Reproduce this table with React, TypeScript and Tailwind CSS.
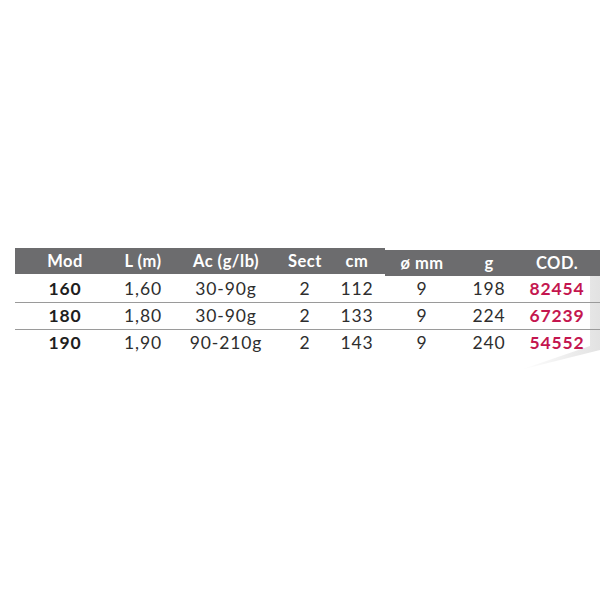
const cols = ['w-[100px]', 'w-[56px]', 'w-[110px]', 'w-[48px]', 'w-[56px]', 'w-[74px]', 'w-[60px]', 'w-[76px]'];

const head = ['Mod', 'L (m)', 'Ac (g/lb)', 'Sect', 'cm', 'ø mm', 'g', 'COD.'];

const rows = [
  ['160', '1,60', '30-90g', '2', '112', '9', '198', '82454'],
  ['180', '1,80', '30-90g', '2', '133', '9', '224', '67239'],
  ['190', '1,90', '90-210g', '2', '143', '9', '240', '54552'],
];

export default function App() {
  return (
    <div className="relative w-[600px] h-[600px] bg-white overflow-hidden" style={{ fontFamily: 'Lato, "Open Sans", sans-serif' }}>
      {/* fond gris décoratif à droite */}
      <svg className="absolute right-0 top-[274px]" width="90" height="100" viewBox="0 0 90 100">
        <defs>
          <linearGradient id="fade" x1="0" y1="0" x2="1" y2="0">
            <stop offset="0" stopColor="#ffffff" />
            <stop offset="1" stopColor="#e2e2e2" />
          </linearGradient>
        </defs>
        <polygon points="80,0 90,0 90,76 10,96 80,72" fill="url(#fade)" />
      </svg>

      <div className="relative pt-[248px] pl-[15px]">
        <div className="flex h-[28px] text-white font-bold text-[16.5px] tracking-[0.03em]">
          <div className="flex items-center bg-[#6c6c6e] h-[26px]">
            {head.slice(0, 5).map((h, i) => (
              <div key={h} className={`${cols[i]} text-center`}>{h}</div>
            ))}
          </div>
          <div className="flex flex-1 items-center bg-[#6c6c6e] h-[26px] mt-[2px]">
            {head.slice(5).map((h, i) => (
              <div key={h} className={`${cols[i + 5]} text-center`}>{h}</div>
            ))}
          </div>
        </div>

        {rows.map((r, ri) => (
          <div key={r[0]} className={`flex items-center h-[27px] text-[17.5px] tracking-[0.05em] text-[#2e2e2e] ${ri < 2 ? 'border-b border-[#9a9a9a]' : ''}`}>
            {r.map((c, i) => (
              <div
                key={i}
                className={`${cols[i]} text-center ${i === 0 ? 'font-bold text-[#1e1e1e]' : ''} ${i === 7 ? 'font-bold text-[#c4164f]' : ''}`}
              >
                {c}
              </div>
            ))}
          </div>
        ))}
      </div>
    </div>
  );
}
